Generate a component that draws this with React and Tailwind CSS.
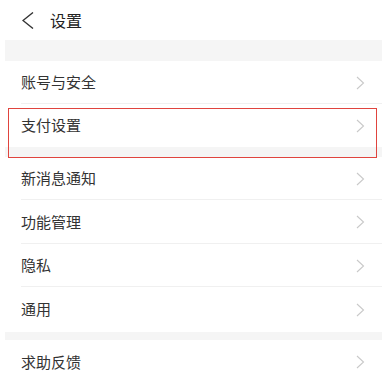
const font = { fontFamily: '"Noto Sans CJK SC", "Noto Sans", sans-serif' };

function Chevron() {
  return (
    <svg width="9" height="14" viewBox="0 0 9 14" fill="none" className="shrink-0">
      <polyline points="1,1 7.5,7 1,13" stroke="#c9c9c9" strokeWidth="1.1" />
    </svg>
  );
}

function Row({ label, h = "h-[44px]", divider = true }) {
  return (
    <div className={`relative flex items-center justify-between pl-[21px] pr-[17px] ${h}`}>
      <span className="text-[15px] text-[#333]">{label}</span>
      <Chevron />
      {divider && <div className="absolute left-[21px] right-0 bottom-0 h-px bg-[#f0f0f0]" />}
    </div>
  );
}

function Gap({ h }) {
  return <div className={`ml-[5px] bg-[#f5f5f5] ${h}`} />;
}

export default function App() {
  return (
    <div className="relative w-[382px] h-[377px] overflow-hidden bg-white" style={font}>
      {/* Header */}
      <div className="flex items-center h-[40px] pl-[22px]">
        <svg width="12" height="17" viewBox="0 0 12 17" fill="none">
          <polyline points="11,0.5 1,8.5 11,16.5" stroke="#333" strokeWidth="1.4" />
        </svg>
        <span className="ml-[16px] text-[16px] text-[#222]">设置</span>
      </div>

      <Gap h="h-[21px]" />
      <Row label="账号与安全" h="h-[43px]" />
      <Row label="支付设置" h="h-[43px]" divider={false} />
      <Gap h="h-[10px]" />
      <Row label="新消息通知" h="h-[43px]" />
      <Row label="功能管理" />
      <Row label="隐私" h="h-[43px]" />
      <Row label="通用" h="h-[45px]" divider={false} />
      <Gap h="h-[8px]" />
      <Row label="求助反馈" divider={false} />

      {/* Highlight annotation */}
      <div className="absolute left-[8px] top-[108px] w-[369px] h-[50px] border border-[#e0443e] pointer-events-none" />
    </div>
  );
}
